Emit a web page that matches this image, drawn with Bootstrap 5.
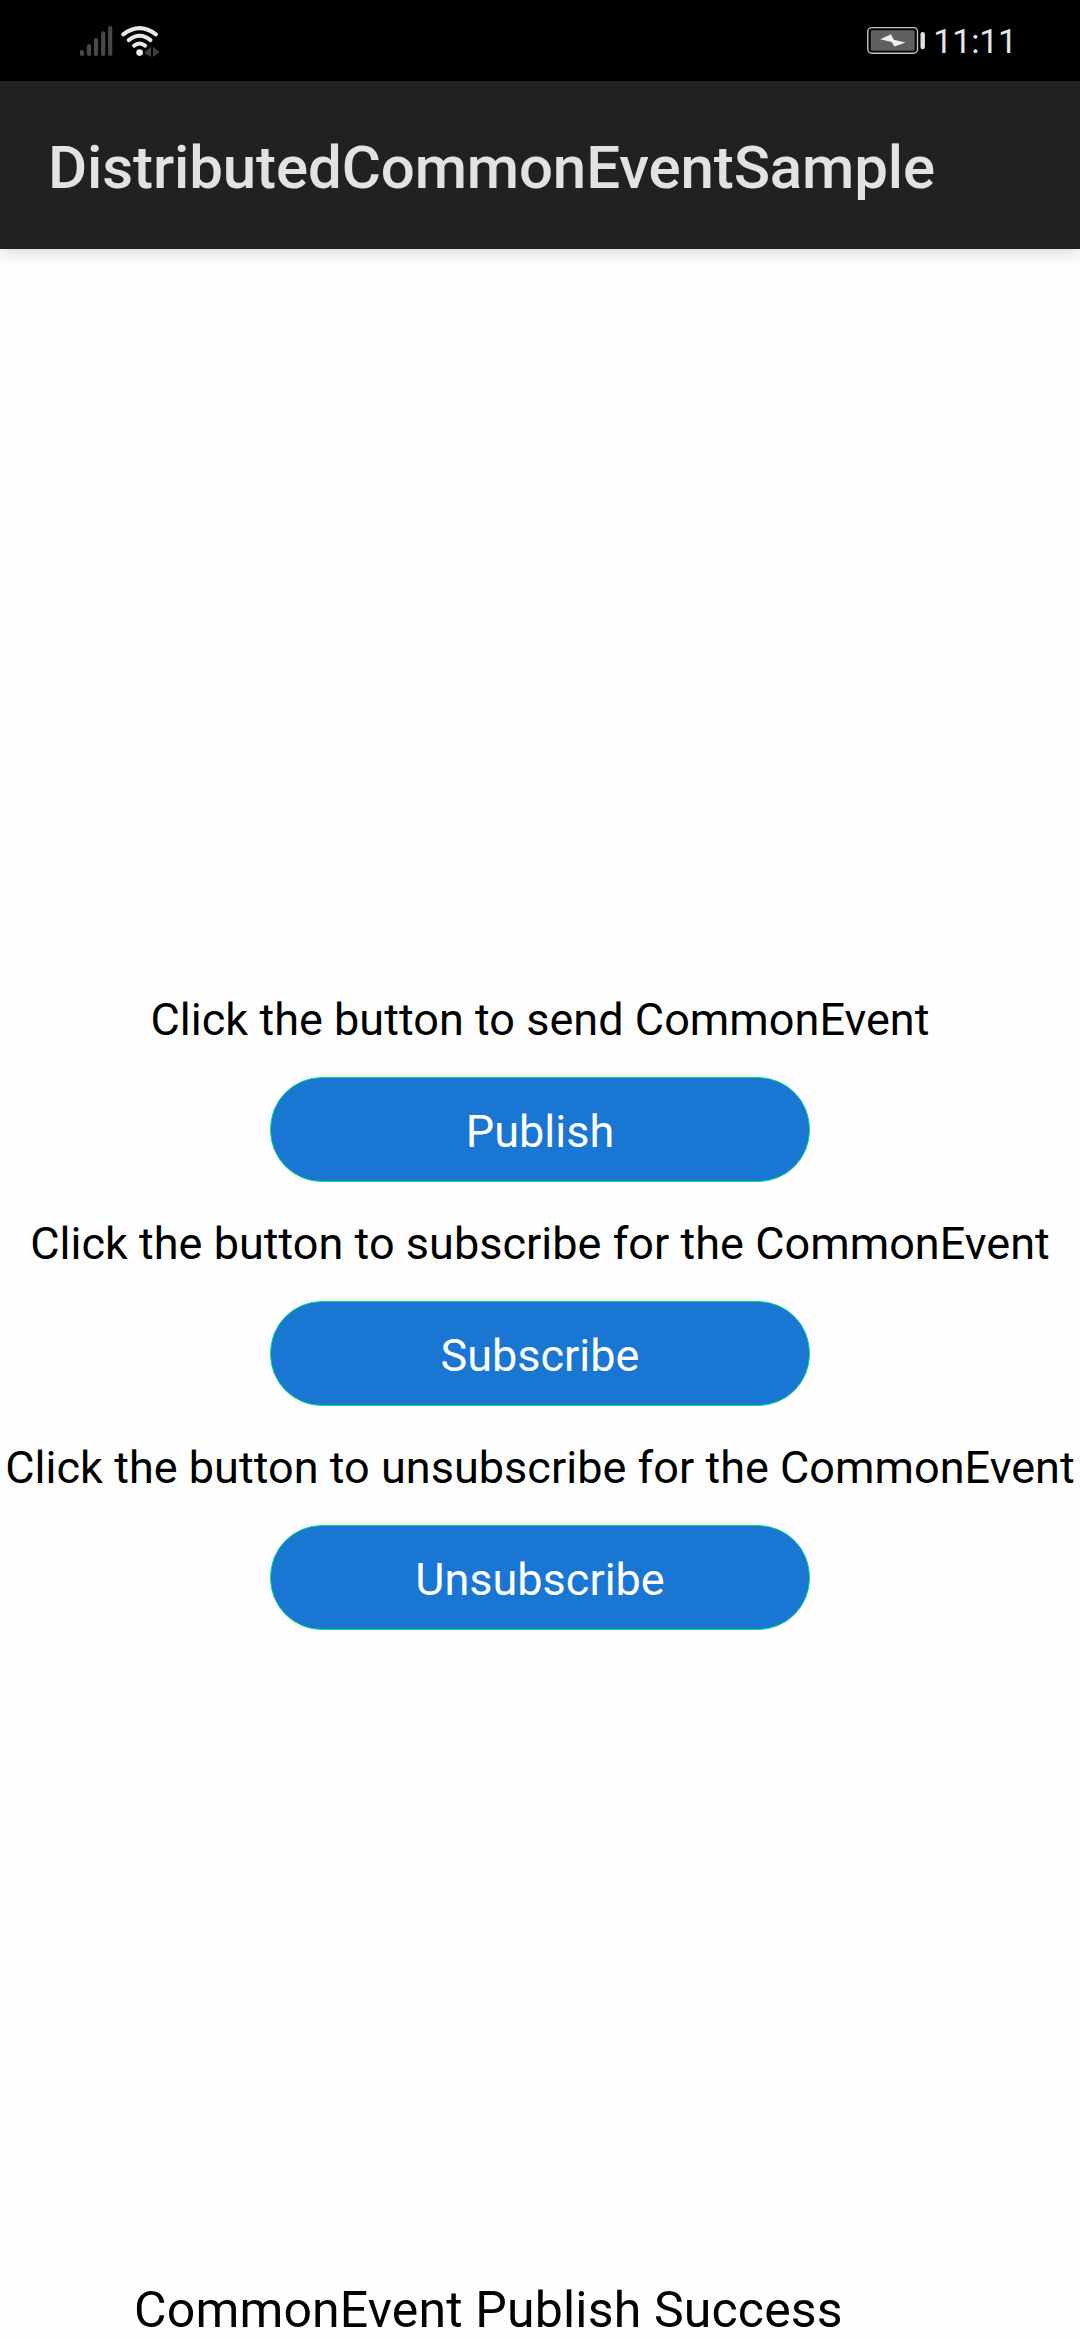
<!DOCTYPE html>
<html lang="en">
<head>
<meta charset="utf-8">
<meta name="viewport" content="width=device-width, initial-scale=1">
<title>DistributedCommonEventSample</title>
<link rel="stylesheet" href="https://cdn.jsdelivr.net/npm/bootstrap@5.3.0/dist/css/bootstrap.min.css">
<style>
body{font-family:Roboto,"Liberation Sans",sans-serif;background:#fefefe;height:2340px;color:#000;overflow:hidden}
.status-bar{height:81px;background:#000;padding:0 63px 0 80px}
.status-bar svg{display:block}
.clock{font-size:34px;line-height:40px;color:#e6e6e6;margin-left:6px;letter-spacing:-.2px}
.app-bar{height:168px;background:#212121;padding:0 48px;box-shadow:0 3px 16px rgba(0,0,0,.16);--bs-navbar-padding-y:0}
.app-title{font-size:60px;line-height:70px;font-weight:500;color:#e2e2e2;margin:5px 0 0;padding:0;letter-spacing:-.11px}
.actions{padding-top:744px}
.prompt{font-size:45px;line-height:53px;margin:0 0 31px;white-space:nowrap;letter-spacing:.03px}
.pill{width:540px;height:105px;border-radius:52px;border:1px solid #04d98c;background:#1976d3;font-size:45px;line-height:53px;padding:3px 0 0;margin-bottom:35px;color:#fff}
.result{font-size:50px;line-height:59px;padding-left:134px;letter-spacing:.16px}
</style>
<script src="https://cdn.jsdelivr.net/npm/bootstrap@5.3.0/dist/js/bootstrap.bundle.min.js"></script>
</head>
<body class="d-flex flex-column">
<header>
  <div class="status-bar d-flex justify-content-between align-items-center">
    <svg width="80" height="32" viewBox="80 24 80 32" aria-label="Signal and Wi-Fi">
      <g stroke="#484848" stroke-width="4.2" stroke-linecap="round">
        <path d="M81.9 51V53M89 45V53M96 39V53M103.200 32.300V53M110.200 27V53"/>
      </g>
      <g fill="none" stroke="#e9e9e9" stroke-width="4" stroke-linecap="round">
        <path d="M123.300 33.300Q139.500 20.900 155.900 33.300"/>
        <path d="M128.700 39.100Q139.600 30.500 150.500 39.100"/>
        <path d="M134.100 44.600Q139.600 40.300 145.100 44.600"/>
      </g>
      <circle cx="139.600" cy="51.600" r="3.300" fill="#f0f0f0"/>
      <path d="M151 46V56L145 52.500V51ZM153 46L159 50.500V51.500L153 56Z" fill="#404040"/>
    </svg>
    <div class="d-flex align-items-center">
      <svg width="60" height="30" viewBox="867 26 60 30" aria-label="Battery charging">
        <rect x="867.800" y="27.600" width="49.700" height="25.700" rx="4" fill="none" stroke="#c4c4c4" stroke-width="1.400"/>
        <rect x="870.700" y="30.300" width="44" height="20.400" rx="2" fill="#606060"/>
        <path d="M891 34.300L893.800 39.700L905.500 42.400L894.500 46.600L891.600 41.900L880.300 39.200Z" fill="#f0f0f0"/>
        <rect x="920.500" y="32" width="4.400" height="17.300" rx="2.200" fill="#e2e2e2"/>
      </svg>
      <span class="clock">11:11</span>
    </div>
  </div>
  <nav class="app-bar navbar d-flex align-items-center">
    <h1 class="app-title">DistributedCommonEventSample</h1>
  </nav>
</header>
<main class="actions d-flex flex-column align-items-center">
  <p class="prompt">Click the button to send CommonEvent</p>
  <button type="button" class="pill btn">Publish</button>
  <p class="prompt">Click the button to subscribe for the CommonEvent</p>
  <button type="button" class="pill btn">Subscribe</button>
  <p class="prompt">Click the button to unsubscribe for the CommonEvent</p>
  <button type="button" class="pill btn">Unsubscribe</button>
</main>
<footer class="result mt-auto">CommonEvent Publish Success</footer>
</body>
</html>
